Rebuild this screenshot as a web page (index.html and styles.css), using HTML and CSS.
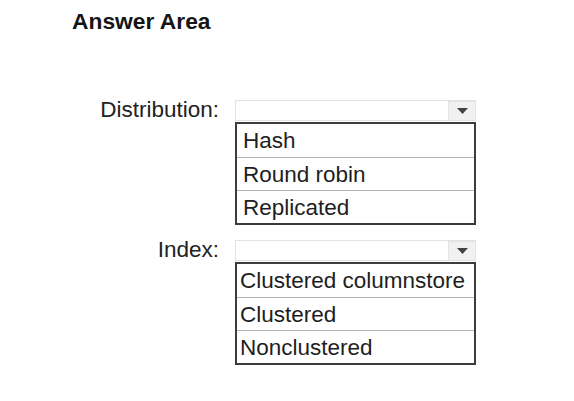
FILE: index.html
```html
<!DOCTYPE html>
<html>
<head>
<meta charset="utf-8">
<link rel="stylesheet" href="styles.css">
</head>
<body>
<div class="page">
  <h1 class="title">Answer Area</h1>
  <div class="form">
    <div class="label">Distribution:</div>
    <div class="control">
      <div class="select"><span class="arrow"><svg width="11" height="6" viewBox="0 0 11 6"><path d="M0 0H11L5.5 6Z" fill="#444"/></svg></span></div>
      <ul class="list">
        <li>Hash</li>
        <li>Round robin</li>
        <li>Replicated</li>
      </ul>
    </div>
    <div class="label">Index:</div>
    <div class="control">
      <div class="select"><span class="arrow"><svg width="11" height="6" viewBox="0 0 11 6"><path d="M0 0H11L5.5 6Z" fill="#444"/></svg></span></div>
      <ul class="list list-tight">
        <li>Clustered columnstore</li>
        <li>Clustered</li>
        <li>Nonclustered</li>
      </ul>
    </div>
  </div>
</div>
</body>
</html>
```
FILE: styles.css
```css
html, body {
  margin: 0;
  padding: 0;
  background: #fff;
}
.page {
  font-family: "Liberation Sans", Arial, sans-serif;
  color: #1e1e1e;
  padding-top: 9px;
}
.title {
  margin: 0 0 0 72px;
  font-size: 22.8px;
  line-height: 24px;
  font-weight: bold;
  color: #151515;
}
.form {
  display: grid;
  grid-template-columns: 219px 241px;
  column-gap: 16px;
  row-gap: 15px;
  margin-top: 67px;
}
.label {
  text-align: right;
  font-size: 22.5px;
  line-height: 20px;
  color: #222;
}
.control {
  display: flex;
  flex-direction: column;
}
.select {
  height: 19px;
  border: 1px solid #e2e2e2;
  border-right: none;
  display: flex;
  justify-content: flex-end;
}
.arrow {
  width: 26px;
  background: #f1f1f1;
  border: 1px solid #e4e4e4;
  border-bottom: none;
  display: flex;
  align-items: center;
  justify-content: center;
}
.list {
  list-style: none;
  margin: 1px 0 0 0;
  padding: 0;
  border: 2px solid #3c3c3c;
}
.list li {
  height: 33px;
  line-height: 33px;
  font-size: 22.5px;
  padding-left: 6px;
  border-top: 1px solid #b5b5b5;
  box-sizing: border-box;
}
.list li:first-child {
  border-top: none;
  height: 33px;
}
.list-tight li {
  padding-left: 3px;
}
```
